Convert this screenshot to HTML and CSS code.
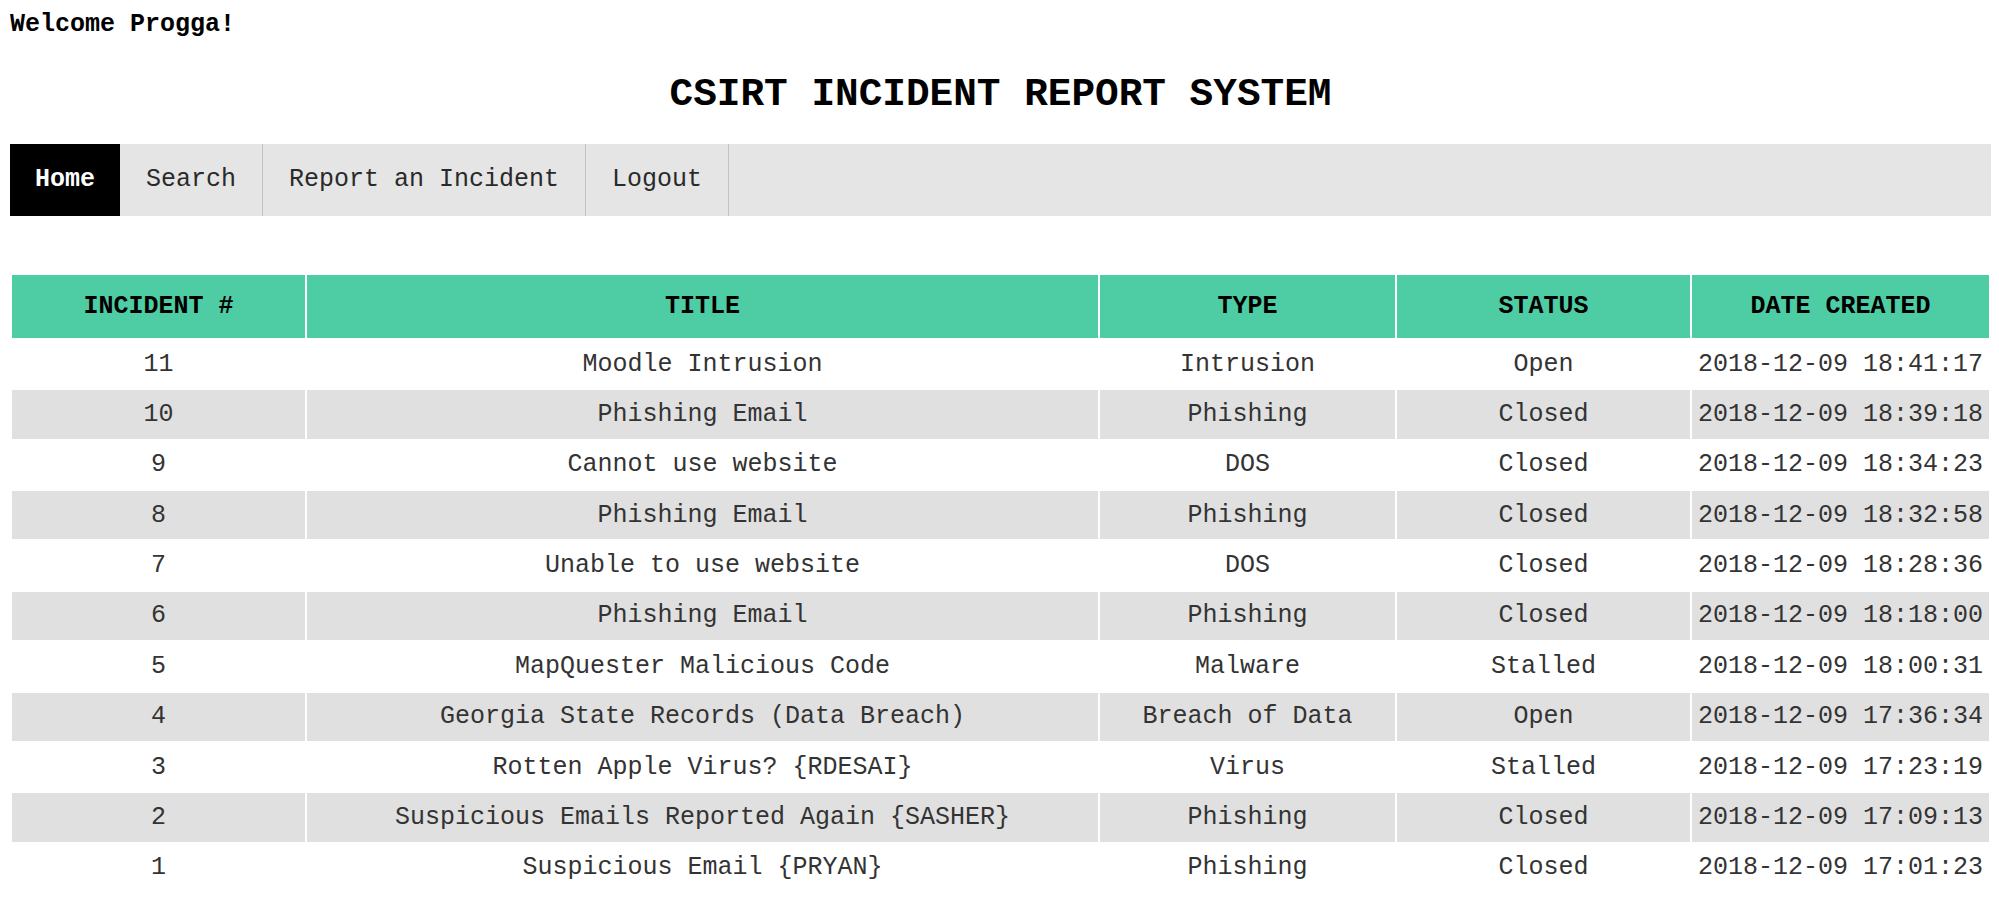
FILE: index.html
```html
<!DOCTYPE html>
<html>
<head>
<meta charset="utf-8">
<title>CSIRT Incident Report System</title>
<link rel="stylesheet" href="styles.css">
</head>
<body>
<div class="welcome">Welcome Progga!</div>
<h1 class="title">CSIRT INCIDENT REPORT SYSTEM</h1>
<nav class="nav">
  <a class="nav-item active" href="#">Home</a>
  <a class="nav-item" href="#">Search</a>
  <a class="nav-item" href="#">Report an Incident</a>
  <a class="nav-item" href="#">Logout</a>
</nav>
<table class="incidents">
  <colgroup>
    <col class="c-num">
    <col class="c-title">
    <col class="c-type">
    <col class="c-status">
    <col class="c-date">
  </colgroup>
  <thead>
    <tr><th>INCIDENT #</th><th>TITLE</th><th>TYPE</th><th>STATUS</th><th>DATE CREATED</th></tr>
  </thead>
  <tbody>
    <tr><td>11</td><td>Moodle Intrusion</td><td>Intrusion</td><td>Open</td><td>2018-12-09 18:41:17</td></tr>
    <tr><td>10</td><td>Phishing Email</td><td>Phishing</td><td>Closed</td><td>2018-12-09 18:39:18</td></tr>
    <tr><td>9</td><td>Cannot use website</td><td>DOS</td><td>Closed</td><td>2018-12-09 18:34:23</td></tr>
    <tr><td>8</td><td>Phishing Email</td><td>Phishing</td><td>Closed</td><td>2018-12-09 18:32:58</td></tr>
    <tr><td>7</td><td>Unable to use website</td><td>DOS</td><td>Closed</td><td>2018-12-09 18:28:36</td></tr>
    <tr><td>6</td><td>Phishing Email</td><td>Phishing</td><td>Closed</td><td>2018-12-09 18:18:00</td></tr>
    <tr><td>5</td><td>MapQuester Malicious Code</td><td>Malware</td><td>Stalled</td><td>2018-12-09 18:00:31</td></tr>
    <tr><td>4</td><td>Georgia State Records (Data Breach)</td><td>Breach of Data</td><td>Open</td><td>2018-12-09 17:36:34</td></tr>
    <tr><td>3</td><td>Rotten Apple Virus? {RDESAI}</td><td>Virus</td><td>Stalled</td><td>2018-12-09 17:23:19</td></tr>
    <tr><td>2</td><td>Suspicious Emails Reported Again {SASHER}</td><td>Phishing</td><td>Closed</td><td>2018-12-09 17:09:13</td></tr>
    <tr><td>1</td><td>Suspicious Email {PRYAN}</td><td>Phishing</td><td>Closed</td><td>2018-12-09 17:01:23</td></tr>
  </tbody>
</table>
</body>
</html>
```
FILE: styles.css
```css
html, body {
  background: #ffffff;
}
body {
  margin: 10px 8px 10px 10px;
  font-family: "Liberation Mono", "Courier New", monospace;
  font-size: 25px;
  color: #000;
}
.welcome {
  font-weight: bold;
  font-size: 25px;
}
.title {
  font-size: 39.4px;
  font-weight: bold;
  text-align: center;
  margin: 33px 0 26.5px;
}
.nav {
  display: flex;
  background: #e5e5e5;
}
.nav-item {
  display: block;
  padding: 21.5px 26px;
  color: #2a2a2a;
  text-decoration: none;
  border-right: 1px solid #c2c2c2;
}
.nav-item.active {
  background: #000;
  color: #fff;
  font-weight: bold;
  padding: 21.5px 25px;
  border-right: none;
}
.incidents {
  width: 100%;
  margin-top: 57px;
  border-spacing: 2.5px;
  table-layout: fixed;
}
.c-num { width: 293px; }
.c-title { width: 791px; }
.c-type { width: 295px; }
.c-status { width: 293px; }
.incidents th {
  background: #4ecda5;
  color: #000;
  font-weight: bold;
  padding: 17.2px 4px;
  text-align: center;
  white-space: nowrap;
}
.incidents td {
  padding: 9.7px 2px;
  text-align: center;
  color: #333;
  white-space: nowrap;
}
.incidents tbody tr:nth-child(even) td {
  background: #e0e0e0;
}
```
